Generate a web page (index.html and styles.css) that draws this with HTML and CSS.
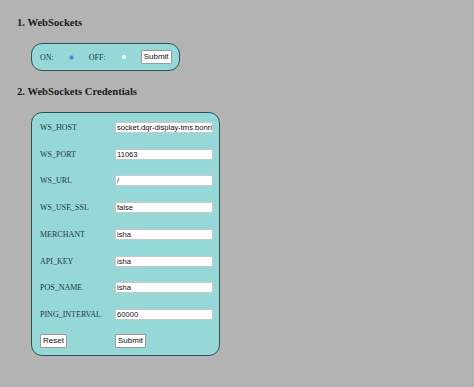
FILE: index.html
```html
<!DOCTYPE html>
<html>
<head>
<meta charset="utf-8">
<link rel="stylesheet" href="styles.css">
</head>
<body>
<h3 class="heading">1. WebSockets</h3>
<div class="panel panel-toggle">
  <span class="label">ON:</span>
  <span class="radio radio-on"></span>
  <span class="label">OFF:</span>
  <span class="radio radio-off"></span>
  <button class="btn">Submit</button>
</div>
<h3 class="heading heading-2">2. WebSockets Credentials</h3>
<div class="panel panel-creds">
  <div class="row"><span class="label">WS_HOST</span><input class="field" value="socket.dqr-display-tms.bonrix.in"></div>
  <div class="row"><span class="label">WS_PORT</span><input class="field" value="11063"></div>
  <div class="row"><span class="label">WS_URL</span><input class="field" value="/"></div>
  <div class="row"><span class="label">WS_USE_SSL</span><input class="field" value="false"></div>
  <div class="row"><span class="label">MERCHANT</span><input class="field" value="isha"></div>
  <div class="row"><span class="label">API_KEY</span><input class="field" value="isha"></div>
  <div class="row"><span class="label">POS_NAME</span><input class="field" value="isha"></div>
  <div class="row"><span class="label">PING_INTERVAL</span><input class="field" value="60000"></div>
  <div class="row"><div class="cell"><button class="btn">Reset</button></div><div class="cell"><button class="btn">Submit</button></div></div>
</div>
</body>
</html>
```
FILE: styles.css
```css
html, body {
  margin: 0;
  padding: 0;
}
body {
  background: #b3b3b3;
  padding: 16px 0 0 17px;
  font-family: "Liberation Serif", "Times New Roman", serif;
  color: #1a1a1a;
}
.heading {
  margin: 0;
  font-size: 10.6px;
  font-weight: bold;
  line-height: 14px;
}
.heading-2 {
  margin-top: 14px;
}
.panel {
  margin-left: 14px;
  background: #96d8d7;
  border: 1.5px solid #2c5454;
  border-radius: 11px;
  box-sizing: border-box;
}
.panel-toggle {
  margin-top: 13px;
  width: 149px;
  height: 28px;
  display: flex;
  align-items: center;
  padding-left: 8px;
}
.label {
  font-size: 8px;
  color: #1e3a3a;
}
.radio {
  display: inline-block;
  border-radius: 50%;
  margin: 0 16px 0 16px;
}
.radio-on {
  width: 3px;
  height: 3px;
  background: #3d7bd6;
  box-shadow: 0 0 0 1px #7db3e6;
}
.radio-off {
  width: 4px;
  height: 4px;
  background: #ffffff;
  margin-left: 16px;
  margin-right: 15px;
}
.btn {
  font-family: "Liberation Sans", Arial, sans-serif;
  font-size: 8px;
  line-height: 10px;
  padding: 1px 2px;
  background: #ffffff;
  border: 1px solid #9a9a9a;
  border-radius: 1px;
  color: #111;
  margin: 0;
}
.panel-creds {
  margin-top: 13px;
  width: 189px;
  height: 244px;
  padding: 1px 0 0 8px;
  display: grid;
  grid-template-rows: repeat(9, 26.75px);
}
.row {
  display: grid;
  grid-template-columns: 75px 98px;
  align-items: center;
}
.cell {
  display: flex;
  align-items: center;
}
.field {
  box-sizing: border-box;
  width: 98px;
  height: 11px;
  border: 1px solid #c8c8c8;
  background: #ffffff;
  font-family: "Liberation Sans", Arial, sans-serif;
  font-size: 7.6px;
  padding: 0 0 0 1px;
  margin: 0;
  color: #111;
  outline: none;
}
```
